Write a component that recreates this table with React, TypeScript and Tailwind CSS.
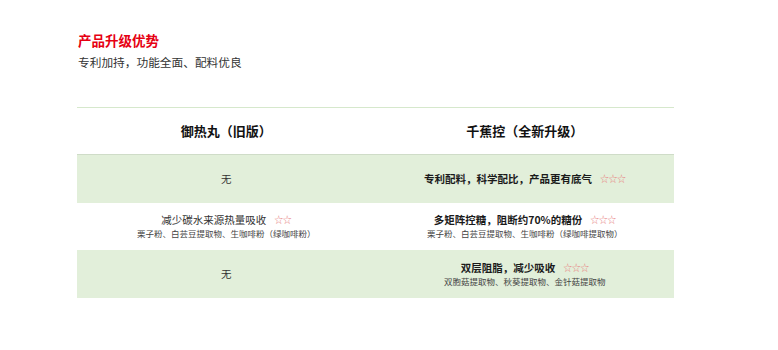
const font = { fontFamily: '"Noto Sans CJK SC", "Noto Sans", sans-serif' };

const rows = [
  {
    left: { title: "无" },
    right: { title: "专利配料，科学配比，产品更有底气", stars: 3, bold: true },
    green: true,
  },
  {
    left: {
      title: "减少碳水来源热量吸收",
      stars: 2,
      sub: "栗子粉、白芸豆提取物、生咖啡粉（绿咖啡粉）",
    },
    right: {
      title: "多矩阵控糖，阻断约70%的糖份",
      stars: 3,
      bold: true,
      sub: "栗子粉、白芸豆提取物、生咖啡粉（绿咖啡提取物）",
    },
    green: false,
  },
  {
    left: { title: "无" },
    right: {
      title: "双层阻脂，减少吸收",
      stars: 3,
      bold: true,
      sub: "双胞菇提取物、秋葵提取物、金针菇提取物",
    },
    green: true,
  },
];

type Cell = { title: string; stars?: number; bold?: boolean; sub?: string };

function CellContent({ cell }: { cell: Cell }) {
  return (
    <div className="flex flex-col items-center justify-center">
      <div
        className={
          "flex items-center text-[10.5px] leading-[14px] " +
          (cell.bold ? "font-bold text-[#1a1a1a]" : "text-[#333]")
        }
      >
        <span>{cell.title}</span>
        {cell.stars ? (
          <span className="ml-[8px] text-[9px] font-normal tracking-[-0.5px] text-[#e87f7f]">
            {"☆".repeat(cell.stars)}
          </span>
        ) : null}
      </div>
      {cell.sub && (
        <div className="text-[8.5px] leading-[12px] text-[#444]">{cell.sub}</div>
      )}
    </div>
  );
}

export default function App() {
  return (
    <div className="h-[350px] w-[778px] bg-white" style={font}>
      <div className="px-[78px] pt-[31px]">
        <h1 className="text-[13.5px] font-bold leading-[18px] text-[#e60012]">产品升级优势</h1>
        <p className="mt-[4px] text-[11.7px] leading-[18px] text-[#333]">
          专利加持，功能全面、配料优良
        </p>
      </div>
      <div className="ml-[77px] mt-[36px] w-[597px] border-t border-[#d6e8cc]">
        <div className="grid h-[47px] grid-cols-2 items-center border-b border-[#cfdcc8] text-[13px] font-bold text-[#111]">
          <div className="text-center">御热丸（旧版）</div>
          <div className="text-center">千蕉控（全新升级）</div>
        </div>
        {rows.map((r, i) => (
          <div
            key={i}
            className={
              "grid h-[47.5px] grid-cols-2 items-center " +
              (r.green ? "bg-[#e2efda]" : "bg-white")
            }
          >
            <CellContent cell={r.left} />
            <CellContent cell={r.right} />
          </div>
        ))}
      </div>
    </div>
  );
}
